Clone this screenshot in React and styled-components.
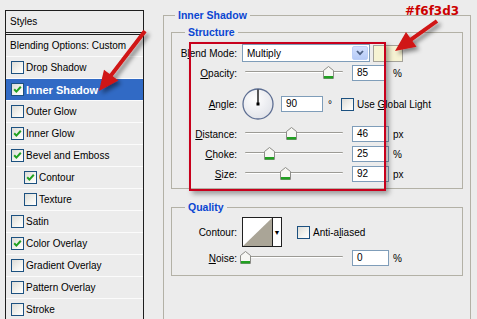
import React from 'react'
import styled, { createGlobalStyle } from 'styled-components'

const GlobalStyle = createGlobalStyle`
  html, body {
    margin: 0;
    padding: 0;
  }
  body {
    background: #ececec;
    font-family: "Liberation Sans", Arial, sans-serif;
    font-size: 10px;
    color: #000;
    overflow: hidden;
  }
`

const Page = styled.div`
  position: relative;
  display: flex;
  align-items: flex-start;
  width: 477px;
  height: 319px;
  overflow: hidden;
`

/* ---------- left: styles list ---------- */

const StylesList = styled.div`
  flex-shrink: 0;
  margin: 10px 0 0 5px;
  width: 139px;
  box-sizing: border-box;
  border: 1px solid #1e1e1e;
  border-bottom: none;
  background: #ececec;
`

const ListHeader = styled.div`
  height: 21px;
  line-height: 21px;
  padding-left: 4px;
  border-bottom: 3px double #1e1e1e;
`

const ListRow = styled.div`
  display: flex;
  align-items: center;
  gap: 2px;
  height: ${(p) => p.$h || 21}px;
  padding-left: ${(p) => p.$pl || 5}px;
  border-bottom: 1px solid #fbfbfb;
  background: ${(p) => (p.$selected ? '#316ac5' : 'transparent')};
  color: ${(p) => (p.$selected ? '#fff' : '#000')};
  font-weight: ${(p) => (p.$selected ? 'bold' : 'normal')};
  font-size: ${(p) => (p.$selected ? 11 : 10)}px;
  white-space: nowrap;
`

const Box = styled.span`
  flex-shrink: 0;
  display: inline-flex;
  align-items: center;
  justify-content: center;
  width: 13px;
  height: 13px;
  box-sizing: border-box;
  border: 1px solid #1c5180;
  background: linear-gradient(135deg, #dcdcd7 0%, #f4f4f0 60%, #ffffff 100%);
`

const CheckBox = ({ checked }) => (
  <Box>
    {checked && (
      <svg width="9" height="9" viewBox="0 0 9 9">
        <path d="M1.2 4.2 L3.4 6.6 L7.8 1.8" fill="none" stroke="#21a121" strokeWidth="2" />
      </svg>
    )}
  </Box>
)

/* ---------- right: panels ---------- */

const Group = styled.fieldset`
  margin: ${(p) => p.$mt || 0}px 0 0 ${(p) => p.$ml || 0}px;
  padding: ${(p) => p.$pad};
  min-inline-size: 0;
  box-sizing: border-box;
  width: ${(p) => (p.$w ? `${p.$w}px` : 'auto')};
  height: ${(p) => (p.$h ? `${p.$h}px` : 'auto')};
  border: 1px solid #b3b1a6;
`

const Legend = styled.legend`
  margin-left: ${(p) => p.$ml}px;
  padding: 0 3px;
  font-weight: bold;
  font-size: 10.5px;
  line-height: 14px;
  color: #0a46d2;
`

const Row = styled.div`
  display: flex;
  align-items: center;
  height: ${(p) => p.$h}px;
  margin-top: ${(p) => p.$mt || 0}px;
`

const Label = styled.span`
  flex-shrink: 0;
  width: 65px;
  margin-right: 5px;
  text-align: right;
  white-space: nowrap;
`

const Select = styled.div`
  display: flex;
  align-items: center;
  justify-content: space-between;
  width: 128px;
  height: 18px;
  box-sizing: border-box;
  padding: 1px 1px 1px 4px;
  border: 1px solid #7f9db9;
  background: #fff;
`

const DropButton = styled.span`
  display: flex;
  align-items: center;
  justify-content: center;
  width: 16px;
  height: 14px;
  border-radius: 2px;
  background: linear-gradient(#d3e0fd, #b6cbf7);
  border: 1px solid #bccff7;
  box-sizing: border-box;
`

const Swatch = styled.span`
  width: 30px;
  height: 17px;
  margin-left: 3px;
  box-sizing: border-box;
  border: 1px solid #a4a29a;
  background: ${(p) => p.$color};
`

const SliderBox = styled.div`
  position: relative;
  flex-shrink: 0;
  width: 104px;
  height: 14px;
  margin-right: 6px;
`

const Track = styled.div`
  position: absolute;
  left: 3px;
  right: 3px;
  top: 5px;
  height: 1px;
  border-radius: 1px;
  background: #9c9b95;
  border-bottom: 1px solid #fff;
`

const Thumb = styled.svg`
  position: absolute;
  top: 0;
`

const Slider = ({ pos }) => (
  <SliderBox>
    <Track />
    <Thumb width="11" height="13" viewBox="0 0 11 13" style={{ left: 3 + pos * 98 - 5.5 }}>
      <path d="M5.5 0.5 L10.5 4.5 L10.5 12.5 L0.5 12.5 L0.5 4.5 Z" fill="#f7f7f4" stroke="#8d8d88" />
      <rect x="1" y="10" width="9" height="2.5" fill="#21a121" />
    </Thumb>
  </SliderBox>
)

const Field = styled.div`
  flex-shrink: 0;
  width: ${(p) => p.$w}px;
  height: 16px;
  line-height: 14px;
  box-sizing: border-box;
  padding-left: 4px;
  border: 1px solid #7f9db9;
  background: #fff;
`

const Unit = styled.span`
  margin-left: ${(p) => p.$ml || 4}px;
`

const Dial = styled.svg`
  flex-shrink: 0;
  margin-right: 7px;
`

const OptionBox = styled.span`
  display: inline-flex;
  align-items: center;
  gap: 3px;
  margin-left: ${(p) => p.$ml}px;
  white-space: nowrap;
`

const ContourPicker = styled.div`
  display: flex;
  width: 40px;
  height: 30px;
  box-sizing: border-box;
  border: 1px solid #202020;
  background: #fff;
`

const ContourArrow = styled.span`
  display: flex;
  align-items: center;
  justify-content: center;
  flex: 1;
  border-left: 1px solid #202020;
  font-size: 7px;
`

/* ---------- annotations ---------- */

const Marker = styled.div`
  position: absolute;
  left: 189px;
  top: 42px;
  width: 197px;
  height: 149px;
  box-sizing: border-box;
  border: 2px solid #c8001c;
  box-shadow: 3px 3px 5px rgba(0, 0, 0, 0.35);
  pointer-events: none;
`

const HexNote = styled.div`
  position: absolute;
  left: 405px;
  top: 4px;
  font-family: "DejaVu Sans", Verdana, sans-serif;
  font-weight: bold;
  font-size: 12px;
  color: #cc0000;
`

const Overlay = styled.svg`
  position: absolute;
  left: 0;
  top: 0;
  pointer-events: none;
`

const arrowPoints = (tx, ty, px, py) => {
  const dx = px - tx
  const dy = py - ty
  const len = Math.hypot(dx, dy)
  const ux = dx / len
  const uy = dy / len
  const nx = -uy
  const ny = ux
  const shaft = 2
  const headLen = 20
  const headW = 9
  const bx = px - ux * headLen
  const by = py - uy * headLen
  const pts = [
    [tx + nx * shaft, ty + ny * shaft],
    [bx + nx * shaft, by + ny * shaft],
    [bx + nx * headW, by + ny * headW],
    [px, py],
    [bx - nx * headW, by - ny * headW],
    [bx - nx * shaft, by - ny * shaft],
    [tx - nx * shaft, ty - ny * shaft],
  ]
  return pts.map((p) => p.map((v) => v.toFixed(1)).join(',')).join(' ')
}

const layers = [
  { label: 'Drop Shadow' },
  { label: 'Inner Shadow', checked: true, selected: true },
  { label: 'Outer Glow' },
  { label: 'Inner Glow', checked: true },
  { label: 'Bevel and Emboss', checked: true },
  { label: 'Contour', checked: true, nested: true },
  { label: 'Texture', nested: true },
  { label: 'Satin' },
  { label: 'Color Overlay', checked: true },
  { label: 'Gradient Overlay' },
  { label: 'Pattern Overlay' },
  { label: 'Stroke' },
]

const SliderRow = ({ label, pos, value, unit, w = 37, unitMl = 4 }) => (
  <Row $h={20}>
    <Label>{label}</Label>
    <Slider pos={pos} />
    <Field $w={w}>{value}</Field>
    <Unit $ml={unitMl}>{unit}</Unit>
  </Row>
)

export default function App() {
  return (
    <Page>
      <GlobalStyle />

      <StylesList>
        <ListHeader>Styles</ListHeader>
        <ListRow $h={21} $pl={4}>
          Blending Options: Custom
        </ListRow>
        {layers.map((l) => (
          <ListRow key={l.label} $selected={l.selected} $pl={l.nested ? 18 : 5}>
            <CheckBox checked={l.checked} />
            {l.label}
          </ListRow>
        ))}
      </StylesList>

      <Group $mt={8} $ml={19} $w={308} $h={330} $pad="3px 7px 0 7px">
        <Legend $ml={4}>Inner Shadow</Legend>

        <Group $pad="5px 0 4px 0">
          <Legend $ml={13}>Structure</Legend>
          <Row $h={18}>
            <Label>B<u>l</u>end Mode:</Label>
            <Select>
              Multiply
              <DropButton>
                <svg width="8" height="6" viewBox="0 0 8 6">
                  <path d="M1 1 L4 4.2 L7 1" fill="none" stroke="#4d6185" strokeWidth="1.8" />
                </svg>
              </DropButton>
            </Select>
            <Swatch $color="#f6f3d3" />
          </Row>
          <Row $h={22}>
            <Label><u>O</u>pacity:</Label>
            <Slider pos={0.85} />
            <Field $w={33}>85</Field>
            <Unit $ml={8}>%</Unit>
          </Row>
          <Row $h={40}>
            <Label><u>A</u>ngle:</Label>
            <Dial width="32" height="32" viewBox="0 0 32 32">
              <defs>
                <radialGradient id="dialFill" cx="40%" cy="35%" r="70%">
                  <stop offset="0" stopColor="#ffffff" />
                  <stop offset="1" stopColor="#e0e2e8" />
                </radialGradient>
              </defs>
              <circle cx="16" cy="16" r="15" fill="url(#dialFill)" stroke="#5d6e92" strokeWidth="1.3" />
              <line x1="16" y1="16" x2="16" y2="1.5" stroke="#000" strokeWidth="1.3" />
              <rect x="14.5" y="14.5" width="3" height="3" fill="#000" />
            </Dial>
            <Field $w={42}>90</Field>
            <Unit $ml={5}>°</Unit>
            <OptionBox $ml={9}>
              <Box />
              <span>Use <u>G</u>lobal Light</span>
            </OptionBox>
          </Row>
          <SliderRow label={<><u>D</u>istance:</>} pos={0.47} value="46" unit="px" />
          <SliderRow label={<><u>C</u>hoke:</>} pos={0.255} value="25" unit="%" />
          <SliderRow label={<><u>S</u>ize:</>} pos={0.41} value="92" unit="px" />
        </Group>

        <Group $mt={11} $pad="3px 0 8px 0">
          <Legend $ml={13}>Quality</Legend>
          <Row $h={30}>
            <Label>Contour:</Label>
            <ContourPicker>
              <svg width="29" height="28" viewBox="0 0 29 28">
                <polygon points="0,28 29,0 29,28" fill="#aaa597" />
              </svg>
              <ContourArrow>▼</ContourArrow>
            </ContourPicker>
            <OptionBox $ml={15}>
              <Box />
              <span>Anti-a<u>l</u>iased</span>
            </OptionBox>
          </Row>
          <Row $h={18} $mt={2}>
            <Label><u>N</u>oise:</Label>
            <Slider pos={0} />
            <Field $w={37}>0</Field>
            <Unit $ml={4}>%</Unit>
          </Row>
        </Group>
      </Group>

      <Marker />
      <HexNote>#f6f3d3</HexNote>
      <Overlay width="477" height="319" viewBox="0 0 477 319">
        <defs>
          <filter id="arrowShadow" x="-30%" y="-30%" width="160%" height="160%">
            <feDropShadow dx="3" dy="3" stdDeviation="2.2" floodColor="#000" floodOpacity="0.45" />
          </filter>
        </defs>
        <g filter="url(#arrowShadow)" fill="#d01414">
          <polygon points={arrowPoints(145, 31, 99, 91)} />
          <polygon points={arrowPoints(437, 21, 395, 51)} />
        </g>
      </Overlay>
    </Page>
  )
}
